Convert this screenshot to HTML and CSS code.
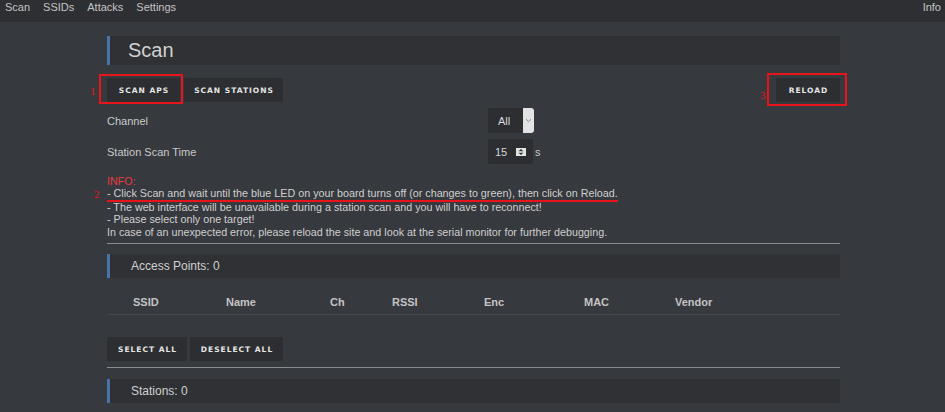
FILE: index.html
```html
<!DOCTYPE html>
<html>
<head>
<meta charset="utf-8">
<link rel="stylesheet" href="styles.css">
</head>
<body>
<nav class="nav">
  <div class="nav-left">
    <a class="nav-link">Scan</a>
    <a class="nav-link">SSIDs</a>
    <a class="nav-link">Attacks</a>
    <a class="nav-link">Settings</a>
  </div>
  <a class="nav-link">Info</a>
</nav>
<main class="main">
  <div class="card-title big">Scan</div>
  <div class="btn-row">
    <div class="btn-group">
      <span class="btn mark mark1">SCAN APS<span class="num n1">1</span></span>
      <span class="btn b2">SCAN STATIONS</span>
    </div>
    <span class="btn mark mark3">RELOAD<span class="num n3">3</span></span>
  </div>
  <div class="settings">
    <div class="label">Channel</div>
    <div class="select"><span class="sel-val">All</span><span class="sel-arrow"><svg width="7" height="5" viewBox="0 0 7 5"><path d="M1 1.2 L3.5 3.6 L6 1.2" fill="none" stroke="#8a8a8a" stroke-width="1"/></svg></span></div>
    <div class="label">Station Scan Time</div>
    <div class="numrow"><div class="number"><span>15</span><span class="spin"><svg width="10" height="8" viewBox="0 0 10 8"><path d="M5 1 L7.5 3.3 L2.5 3.3 Z M5 7 L7.5 4.7 L2.5 4.7 Z" fill="#333"/></svg></span></div><span class="unit">s</span></div>
  </div>
  <div class="info">
    <div class="red">INFO:</div>
    <div class="u"><span class="num n2">2</span>- Click Scan and wait until the blue LED on your board turns off (or changes to green), then click on Reload.</div>
    <div>- The web interface will be unavailable during a station scan and you will have to reconnect!</div>
    <div>- Please select only one target!</div>
    <div>In case of an unexpected error, please reload the site and look at the serial monitor for further debugging.</div>
  </div>
  <hr class="sep">
  <div class="card-title small">Access Points: 0</div>
  <div class="thead">
    <span class="c1">SSID</span><span class="c2">Name</span><span class="c3">Ch</span><span class="c4">RSSI</span><span class="c5">Enc</span><span class="c6">MAC</span><span class="c7">Vendor</span>
  </div>
  <div class="btn-group sel">
    <span class="btn w1">SELECT ALL</span>
    <span class="btn w2">DESELECT ALL</span>
  </div>
  <hr class="sep sep2">
  <div class="card-title small">Stations: 0</div>
</main>
</body>
</html>
```
FILE: styles.css
```css
html, body {
  margin: 0;
  padding: 0;
  background: #36393e;
  font-family: "Liberation Sans", Arial, sans-serif;
  color: #c9c9c9;
  overflow: hidden;
}
.nav {
  height: 22px;
  background: #2d2f33;
  display: flex;
  justify-content: space-between;
  align-items: center;
  padding: 0 4px 0 5px;
}
.nav-left {
  display: flex;
  gap: 13px;
}
.nav-link {
  font-size: 11px;
  color: #c3c3c3;
  line-height: 14px;
  margin-top: -8px;
}
.main {
  width: 733px;
  margin-left: 107px;
  padding-top: 14px;
}
.card-title {
  background: #2f3135;
  border-left: 3px solid #4873ab;
  color: #d0d0d0;
  display: flex;
  align-items: center;
}
.card-title.big {
  height: 29px;
  font-size: 20px;
  padding-left: 18px;
}
.card-title.small {
  height: 24px;
  font-size: 12px;
  padding-left: 21px;
}
.btn-row {
  display: flex;
  justify-content: space-between;
  margin-top: 13px;
}
.btn-group {
  display: flex;
  gap: 4px;
}
.btn {
  position: relative;
  box-sizing: border-box;
  height: 24px;
  background: #2c2e32;
  border-radius: 2px;
  color: #e6e6e6;
  font-family: "DejaVu Sans", Verdana, sans-serif;
  font-weight: bold;
  font-size: 7.5px;
  letter-spacing: 1px;
  white-space: nowrap;
  display: flex;
  align-items: center;
  justify-content: center;
  padding: 0 0 0 1px;
}
.mark1 { width: 73px; }
.b2 { width: 99px; }
.mark3 { width: 64px; }
.mark::after {
  content: "";
  position: absolute;
  border: 2px solid #e8141a;
}
.mark1::after { left: -8px; top: -4px; right: -3px; bottom: -2px; }
.mark3::after { left: -9px; top: -5px; right: -7px; bottom: -4px; }
.num {
  position: absolute;
  color: #e8141a;
  font-family: "Liberation Serif", serif;
  font-size: 11px;
  font-weight: normal;
  letter-spacing: 0;
}
.n1 { left: -17px; top: 7px; }
.n3 { left: -16px; top: 11px; }
.n2 { left: -13px; top: 1px; }
.settings {
  display: grid;
  grid-template-columns: 381px auto;
  row-gap: 6px;
  margin-top: 6px;
  align-items: center;
}
.label {
  font-size: 11px;
  color: #c9c9c9;
  padding-top: 1px;
}
.select {
  width: 45px;
  height: 25px;
  background: #2c2e32;
  border-radius: 2px;
  display: flex;
  font-size: 11px;
  color: #d8d8d8;
}
.sel-val {
  flex: 1;
  display: flex;
  align-items: center;
  padding-left: 10px;
}
.sel-arrow {
  width: 11px;
  background: #e3e3e3;
  border-radius: 0 3px 3px 0;
  display: flex;
  align-items: center;
  justify-content: center;
  margin: 0 -1px 0 0;
}
.numrow {
  display: flex;
  align-items: center;
}
.number {
  width: 45px;
  height: 25px;
  background: #2c2e32;
  border-radius: 2px;
  display: flex;
  align-items: center;
  font-size: 11px;
  color: #d8d8d8;
  padding-left: 7px;
  box-sizing: border-box;
  gap: 9px;
}
.spin {
  width: 10px;
  height: 8px;
  background: #e3e3e3;
  display: flex;
}
.unit {
  font-size: 11px;
  margin-left: 2px;
}
.info {
  margin-top: 11px;
  font-size: 10.75px;
  line-height: 12.4px;
  color: #cfcfcf;
}
.info .red {
  color: #e8393e;
}
.info .u {
  position: relative;
  display: inline-block;
  border-bottom: 2px solid #e8141a;
  line-height: 11.4px;
  margin-bottom: -1px;
}
.sep {
  border: 0;
  height: 1px;
  background: #8a8b8e;
  margin: 5px 0 10px 0;
}
.thead {
  position: relative;
  height: 36px;
  border-bottom: 1px solid #45484d;
  margin-bottom: 22px;
  font-size: 11px;
  font-weight: bold;
  color: #c4c4c4;
}
.thead span { position: absolute; bottom: 6px; }
.c1 { left: 26px; }
.c2 { left: 119px; }
.c3 { left: 223px; }
.c4 { left: 285px; }
.c5 { left: 377px; }
.c6 { left: 477px; }
.c7 { left: 568px; }
.sel .w1 { width: 80px; }
.sel { gap: 3px; }
.sel .w2 { width: 93px; }
.sep2 { margin: 6px 0 11px 0; }
```
